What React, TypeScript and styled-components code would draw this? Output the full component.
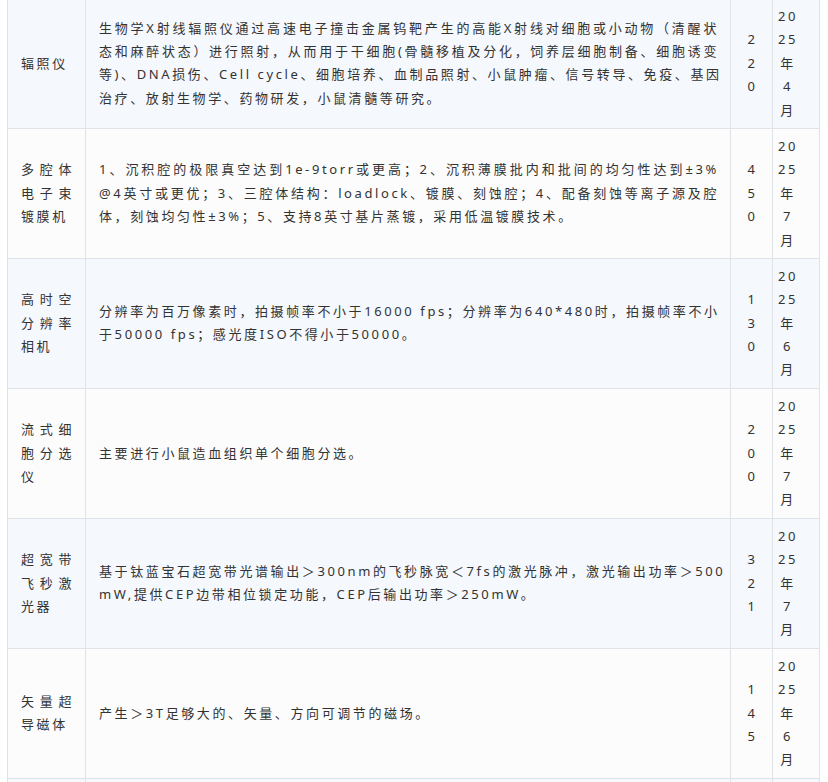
import React from 'react';
import styled, { createGlobalStyle } from 'styled-components';

const GlobalStyle = createGlobalStyle`
  html, body {
    margin: 0;
    padding: 0;
    background: #fff;
  }
  body {
    font-family: "Noto Sans", "Noto Sans CJK SC", sans-serif;
    color: #333;
  }
`;

const Page = styled.div`
  height: 782px;
  overflow: hidden;
  padding-left: 7px;
`;

const Table = styled.table`
  width: 813px;
  margin-top: -2px;
  border-collapse: collapse;
  table-layout: fixed;
  font-size: 13px;
  line-height: 1.8;
  letter-spacing: 0.2em;
`;

const Row = styled.tr<{ $striped: boolean }>`
  background: ${(p) => (p.$striped ? '#f5f8fd' : '#fcfcfc')};
`;

type CellKind = 'text' | 'num' | 'date';

const Cell = styled.td<{ $kind?: CellKind }>`
  border: 1px solid #dfe2e6;
  vertical-align: middle;
  word-break: break-all;
  padding: ${(p) => (p.$kind === 'date' ? '6px 19px 6px 3px' : '6px 11px 6px 13px')};
  text-align: ${(p) => (p.$kind === 'text' || !p.$kind ? 'left' : 'center')};
`;

const EmptyCell = styled.td`
  border: 1px solid #dfe2e6;
  height: 117px;
`;

// one visual line; every line but the last is stretched to the full width
const Line = styled.span`
  display: block;
  white-space: nowrap;

  &:not(:last-child) {
    text-align-last: justify;
  }
`;

interface Equipment {
  name: string[];
  desc: string[];
  price: string;
  date: string;
}

const rows: Equipment[] = [
  {
    name: ['辐照仪'],
    desc: [
      '生物学X射线辐照仪通过高速电子撞击金属钨靶产生的高能X射线对细胞或小动物（清醒状',
      '态和麻醉状态）进行照射，从而用于干细胞(骨髓移植及分化，饲养层细胞制备、细胞诱变',
      '等)、DNA损伤、Cell cycle、细胞培养、血制品照射、小鼠肿瘤、信号转导、免疫、基因',
      '治疗、放射生物学、药物研发，小鼠清髓等研究。',
    ],
    price: '220',
    date: '2025年4月',
  },
  {
    name: ['多腔体', '电子束', '镀膜机'],
    desc: [
      '1、沉积腔的极限真空达到1e-9torr或更高；2、沉积薄膜批内和批间的均匀性达到±3%',
      '@4英寸或更优；3、三腔体结构：loadlock、镀膜、刻蚀腔；4、配备刻蚀等离子源及腔',
      '体，刻蚀均匀性±3%；5、支持8英寸基片蒸镀，采用低温镀膜技术。',
    ],
    price: '450',
    date: '2025年7月',
  },
  {
    name: ['高时空', '分辨率', '相机'],
    desc: [
      '分辨率为百万像素时，拍摄帧率不小于16000 fps；分辨率为640*480时，拍摄帧率不小',
      '于50000 fps；感光度ISO不得小于50000。',
    ],
    price: '130',
    date: '2025年6月',
  },
  {
    name: ['流式细', '胞分选', '仪'],
    desc: ['主要进行小鼠造血组织单个细胞分选。'],
    price: '200',
    date: '2025年7月',
  },
  {
    name: ['超宽带', '飞秒激', '光器'],
    desc: [
      '基于钛蓝宝石超宽带光谱输出＞300nm的飞秒脉宽＜7fs的激光脉冲，激光输出功率＞500',
      'mW,提供CEP边带相位锁定功能，CEP后输出功率＞250mW。',
    ],
    price: '321',
    date: '2025年7月',
  },
  {
    name: ['矢量超', '导磁体'],
    desc: ['产生＞3T足够大的、矢量、方向可调节的磁场。'],
    price: '145',
    date: '2025年6月',
  },
];

const App: React.FC = () => {
  return (
    <Page>
      <GlobalStyle />
      <Table>
        <colgroup>
          <col style={{ width: 78 }} />
          <col style={{ width: 645 }} />
          <col style={{ width: 42 }} />
          <col style={{ width: 47 }} />
        </colgroup>
        <tbody>
          {rows.map((row, i) => (
            <Row key={i} $striped={i % 2 === 0}>
              <Cell $kind="text">
                {row.name.map((l, j) => (
                  <Line key={j}>{l}</Line>
                ))}
              </Cell>
              <Cell $kind="text">
                {row.desc.map((l, j) => (
                  <Line key={j}>{l}</Line>
                ))}
              </Cell>
              <Cell $kind="num">{row.price}</Cell>
              <Cell $kind="date">{row.date}</Cell>
            </Row>
          ))}
          <Row $striped>
            <EmptyCell />
            <EmptyCell />
            <EmptyCell />
            <EmptyCell />
          </Row>
        </tbody>
      </Table>
    </Page>
  );
};

export default App;
